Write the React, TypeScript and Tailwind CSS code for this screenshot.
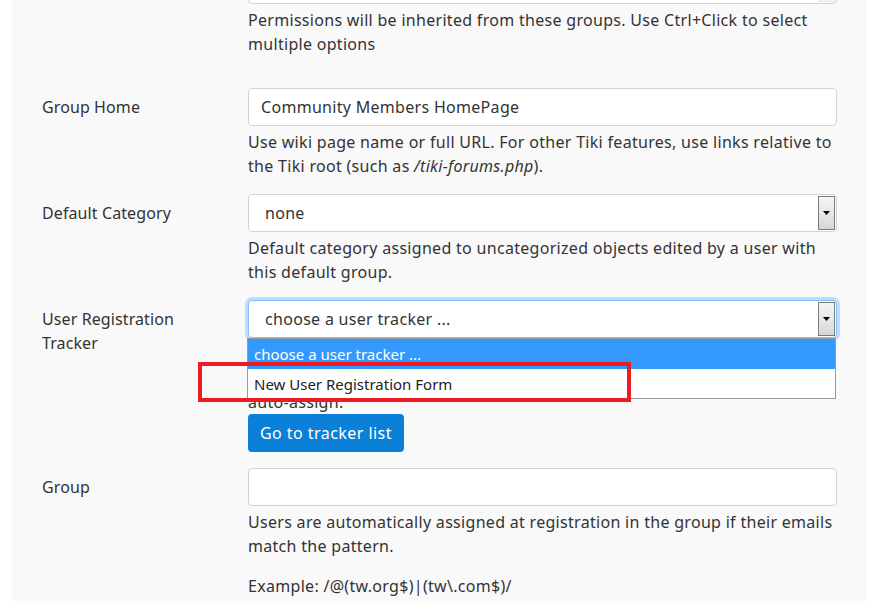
import React from "react";

const font = { fontFamily: '"Noto Sans", "Open Sans", sans-serif' };

function Arrow() {
  return (
    <div className="absolute right-[1px] top-[1px] bottom-[1px] w-[17px] border border-[#7a7a7a] bg-gradient-to-b from-[#f4f4f4] via-[#e8e8e8] to-[#d6d6d6] flex items-start justify-center pt-[14px]">
      <svg width="7" height="4" viewBox="0 0 7 4">
        <polygon points="0,0 7,0 3.5,4" fill="#000" />
      </svg>
    </div>
  );
}

export default function App() {
  return (
    <div className="relative bg-white w-[883px] h-[601px] overflow-hidden text-[16px] leading-[24px] text-[#333] tracking-[0.3px]" style={font}>
      <div className="ml-[12px] w-[855px] h-[601px] bg-[#f9f9f9] pl-[30px] pr-[29px] flex flex-col">
        <div className="grid grid-cols-[206px_589px] -mt-[34px]">
          {/* Row 0: inherited groups */}
          <div></div>
          <div className="mb-[32px]">
            <div className="relative h-[38px] bg-white border border-[#ced4da] rounded-[4px]">
              <div className="absolute right-[1px] top-[1px] bottom-[1px] w-[16px] bg-[#f0f0f0] border-l border-[#dcdcdc]"></div>
            </div>
            <p className="mt-[4px]">
              Permissions will be inherited from these groups. Use Ctrl+Click to select multiple options
            </p>
          </div>

          {/* Group Home */}
          <div className="pt-[7px] tracking-[0.1px]">Group Home</div>
          <div className="mb-[16px]">
            <div className="h-[38px] bg-white border border-[#ced4da] rounded-[4px] px-[12px] flex items-center">
              Community Members HomePage
            </div>
            <p className="mt-[4px]">
              Use wiki page name or full URL. For other Tiki features, use links relative to the Tiki root (such as <i>/tiki-forums.php</i>).
            </p>
          </div>

          {/* Default Category */}
          <div className="pt-[7px] tracking-[0.1px]">Default Category</div>
          <div className="mb-[16px]">
            <div className="relative h-[38px] bg-white border border-[#ced4da] rounded-[4px] pl-[16px] flex items-center">
              none
              <Arrow />
            </div>
            <p className="mt-[4px]">
              Default category assigned to uncategorized objects edited by a user with this default group.
            </p>
          </div>

          {/* User Registration Tracker */}
          <div className="pt-[7px] pr-[20px] tracking-[0.1px]">User Registration Tracker</div>
          <div className="mb-[16px]">
            <div className="relative">
              <div className="relative h-[38px] bg-white border border-[#80bdff] rounded-[4px] pl-[16px] flex items-center shadow-[0_0_0_3px_rgba(0,123,255,0.22)]">
                choose a user tracker ...
                <Arrow />
              </div>
              <div className="absolute z-10 left-[-1px] top-[38px] w-[589px] bg-white border border-[#999] text-[15px] tracking-normal">
                <div className="h-[30px] bg-[#3399ff] text-white pl-[6px] flex items-center">choose a user tracker ...</div>
                <div className="h-[29px] bg-white text-[#222] pl-[6px] flex items-center">New User Registration Form</div>
              </div>
            </div>
            <p className="mt-[4px]">
              Choose a user tracker to be used for user registration. The tracker
              <br />
              must have a user selector field with
              <br />
              auto-assign.
            </p>
            <div>
              <button className="h-[38px] px-[12px] bg-[#0b80d8] text-white rounded-[4px] leading-[24px] tracking-[0.45px]">
                Go to tracker list
              </button>
            </div>
          </div>

          {/* Group */}
          <div className="pt-[7px] tracking-[0.1px]">Group</div>
          <div className="mb-[16px]">
            <div className="h-[38px] bg-white border border-[#ced4da] rounded-[4px]"></div>
            <p className="mt-[4px]">
              Users are automatically assigned at registration in the group if their emails match the pattern.
            </p>
            <p className="mt-[16px]">Example: /@(tw.org$)|(tw\.com$)/</p>
          </div>
        </div>
      </div>
      <div className="absolute left-[198px] top-[362px] w-[433px] h-[40px] border-[4px] border-[#ed1c24] z-20"></div>
    </div>
  );
}
